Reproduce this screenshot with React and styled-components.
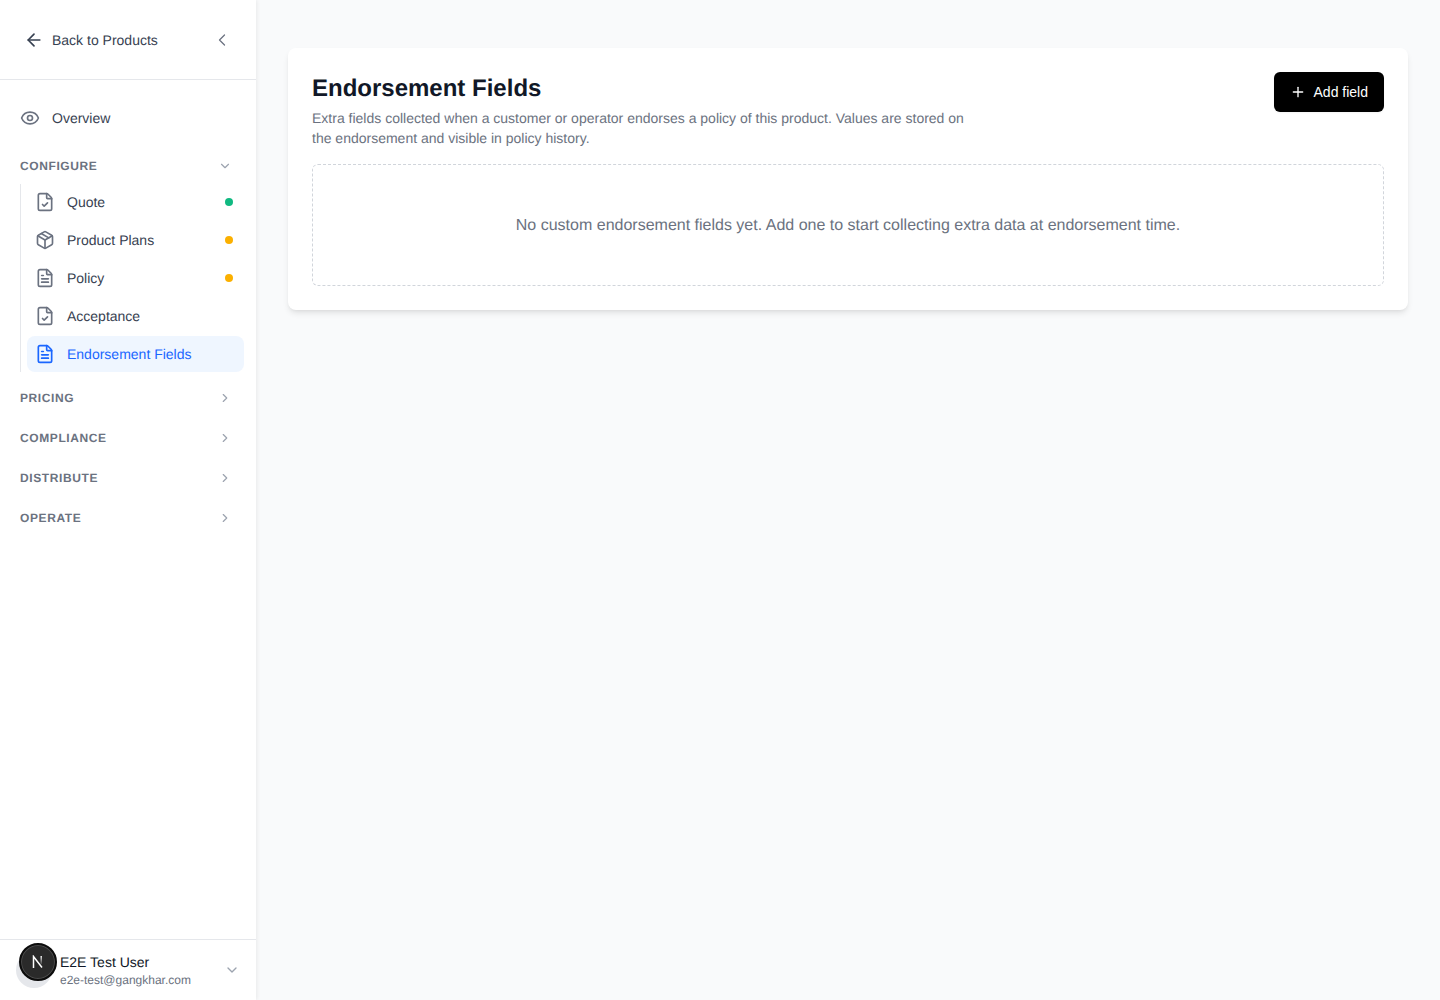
import React from "react";
import styled, { createGlobalStyle } from "styled-components";
import { ArrowLeft, ChevronLeft, ChevronDown, ChevronRight, Eye, FileCheck, FileText, Package, Plus } from "lucide-react";

const Global = createGlobalStyle`
  html, body { margin: 0; padding: 0; height: 100%; }
  body { font-family: "Liberation Sans", Arial, sans-serif; background: #f9fafb; text-rendering: geometricPrecision; }
  * { box-sizing: border-box; }
`;

const Page = styled.div`display: flex; height: 1000px; overflow: hidden;`;
const Sidebar = styled.aside`
  width: 256px; flex: none; background: #fff; display: flex; flex-direction: column;
  box-shadow: 1px 0 4px rgba(0,0,0,.07);
`;
const SideTop = styled.div`
  height: 80px; flex: none; border-bottom: 1px solid #e5e7eb; display: flex; align-items: center;
  justify-content: space-between; padding: 0 24px; color: #374151;
`;
const BackLink = styled.a`display: flex; align-items: center; gap: 8px; font-size: 14px; color: #374151;`;
const Nav = styled.nav`flex: 1; padding: 20px 12px 0 20px;`;
const Overview = styled.a`display: flex; align-items: center; gap: 12px; height: 36px; margin-bottom: 10px; font-size: 14px; color: #374151; svg { color: #6b7280; }`;
const Section = styled.div`
  display: flex; align-items: center; justify-content: space-between; height: 40px; padding-right: 12px;
  font-size: 12px; font-weight: 700; letter-spacing: .6px; color: #6b7280; svg { color: #9ca3af; }
`;
const Items = styled.div`border-left: 1px solid #e5e7eb; padding-left: 6px; margin: -2px 0 6px; display: flex; flex-direction: column; gap: 2px;`;
const Item = styled.a`
  display: flex; align-items: center; height: 36px; padding: 0 11px 0 8px; gap: 12px; border-radius: 8px; font-size: 14px;
  color: ${p => p.$active ? "#1a66ff" : "#374151"}; background: ${p => p.$active ? "#eff6ff" : "transparent"};
  svg { color: ${p => p.$active ? "#1a66ff" : "#6b7280"}; flex: none; }
`;
const Label = styled.span`flex: 1;`;
const Dot = styled.span`width: 8px; height: 8px; border-radius: 50%; background: ${p => p.$color};`;
const Footer = styled.div`
  height: 61px; flex: none; border-top: 1px solid #e5e7eb; display: flex; align-items: center; gap: 8px; padding: 0 16px;
`;
const AvatarSlot = styled.div`width: 36px; height: 36px; flex: none; border-radius: 50%; background: #e5e7eb; position: relative;`;
const DevBadge = styled.div`
  position: absolute; left: 3px; top: -9px; width: 38px; height: 38px; border-radius: 50%; background: #2a2a2a; border: 2px solid #0c0c0c;
  box-shadow: inset 0 0 0 1px #4a4a4a; display: flex; align-items: center; justify-content: center;
`;
const UserInfo = styled.div`flex: 1; min-width: 0;`;
const UserName = styled.div`font-size: 14px; line-height: 20px; color: #111827;`;
const UserMail = styled.div`font-size: 12px; line-height: 16px; color: #6b7280;`;
const Main = styled.main`flex: 1; padding: 48px 32px;`;
const Card = styled.section`background: #fff; border-radius: 8px; padding: 24px; box-shadow: 0 4px 6px -1px rgba(0,0,0,.1), 0 2px 4px -2px rgba(0,0,0,.06);`;
const Head = styled.header`display: flex; justify-content: space-between; align-items: flex-start; margin-bottom: 16px;`;
const Title = styled.h1`margin: 0 0 4px; padding-top: 1px; font-size: 24px; line-height: 31px; font-weight: 700; color: #111827;`;
const Desc = styled.p`margin: 0; font-size: 14px; line-height: 20px; color: #6b7280; max-width: 672px;`;
const AddButton = styled.button`
  display: flex; align-items: center; gap: 8px; height: 40px; padding: 0 16px; border: 0; border-radius: 6px; background: #000; color: #fff;
  font: 400 14px "Liberation Sans", Arial, sans-serif; box-shadow: 0 1px 2px rgba(0,0,0,.05);
`;
const Empty = styled.div`
  height: 122px; padding-top: 1px; border: 1px dashed #d1d5db; border-radius: 6px; display: flex; align-items: center; justify-content: center;
  font-size: 16px; color: #6b7280;
`;

const Brand = () => (
  <svg width="14" height="14" viewBox="0 0 14 14" fill="none" strokeWidth="1.5">
    <defs>
      <linearGradient id="next-fade" x1="0" y1="0" x2="0" y2="1">
        <stop offset="0" stopColor="#fff" />
        <stop offset="1" stopColor="#fff" stopOpacity=".15" />
      </linearGradient>
    </defs>
    <path d="M2.5 13V1.5L11 12.5" stroke="#fff" />
    <rect x="9.5" y="1" width="1.4" height="8" fill="url(#next-fade)" />
  </svg>
);

export default function App() {
  return (
    <Page>
      <Global />
      <Sidebar>
        <SideTop>
          <BackLink><ArrowLeft size={20} strokeWidth={2} />Back to Products</BackLink>
          <ChevronLeft size={20} strokeWidth={1.5} color="#6b7280" />
        </SideTop>
        <Nav>
          <Overview><Eye size={20} strokeWidth={2} />Overview</Overview>
          <Section>CONFIGURE<ChevronDown size={14} /></Section>
          <Items>
            <Item><FileCheck size={20} strokeWidth={2} /><Label>Quote</Label><Dot $color="#10b981" /></Item>
            <Item><Package size={20} strokeWidth={2} /><Label>Product Plans</Label><Dot $color="#fbb000" /></Item>
            <Item><FileText size={20} strokeWidth={2} /><Label>Policy</Label><Dot $color="#fbb000" /></Item>
            <Item><FileCheck size={20} strokeWidth={2} /><Label>Acceptance</Label></Item>
            <Item $active><FileText size={20} strokeWidth={2} /><Label>Endorsement Fields</Label></Item>
          </Items>
          <Section>PRICING<ChevronRight size={14} /></Section>
          <Section>COMPLIANCE<ChevronRight size={14} /></Section>
          <Section>DISTRIBUTE<ChevronRight size={14} /></Section>
          <Section>OPERATE<ChevronRight size={14} /></Section>
        </Nav>
        <Footer>
          <AvatarSlot><DevBadge><Brand /></DevBadge></AvatarSlot>
          <UserInfo><UserName>E2E Test User</UserName><UserMail>e2e-test@gangkhar.com</UserMail></UserInfo>
          <ChevronDown size={16} color="#9ca3af" />
        </Footer>
      </Sidebar>
      <Main>
        <Card>
          <Head>
            <div>
              <Title>Endorsement Fields</Title>
              <Desc>Extra fields collected when a customer or operator endorses a policy of this product. Values are stored on the endorsement and visible in policy history.</Desc>
            </div>
            <AddButton><Plus size={16} />Add field</AddButton>
          </Head>
          <Empty>No custom endorsement fields yet. Add one to start collecting extra data at endorsement time.</Empty>
        </Card>
      </Main>
    </Page>
  );
}
